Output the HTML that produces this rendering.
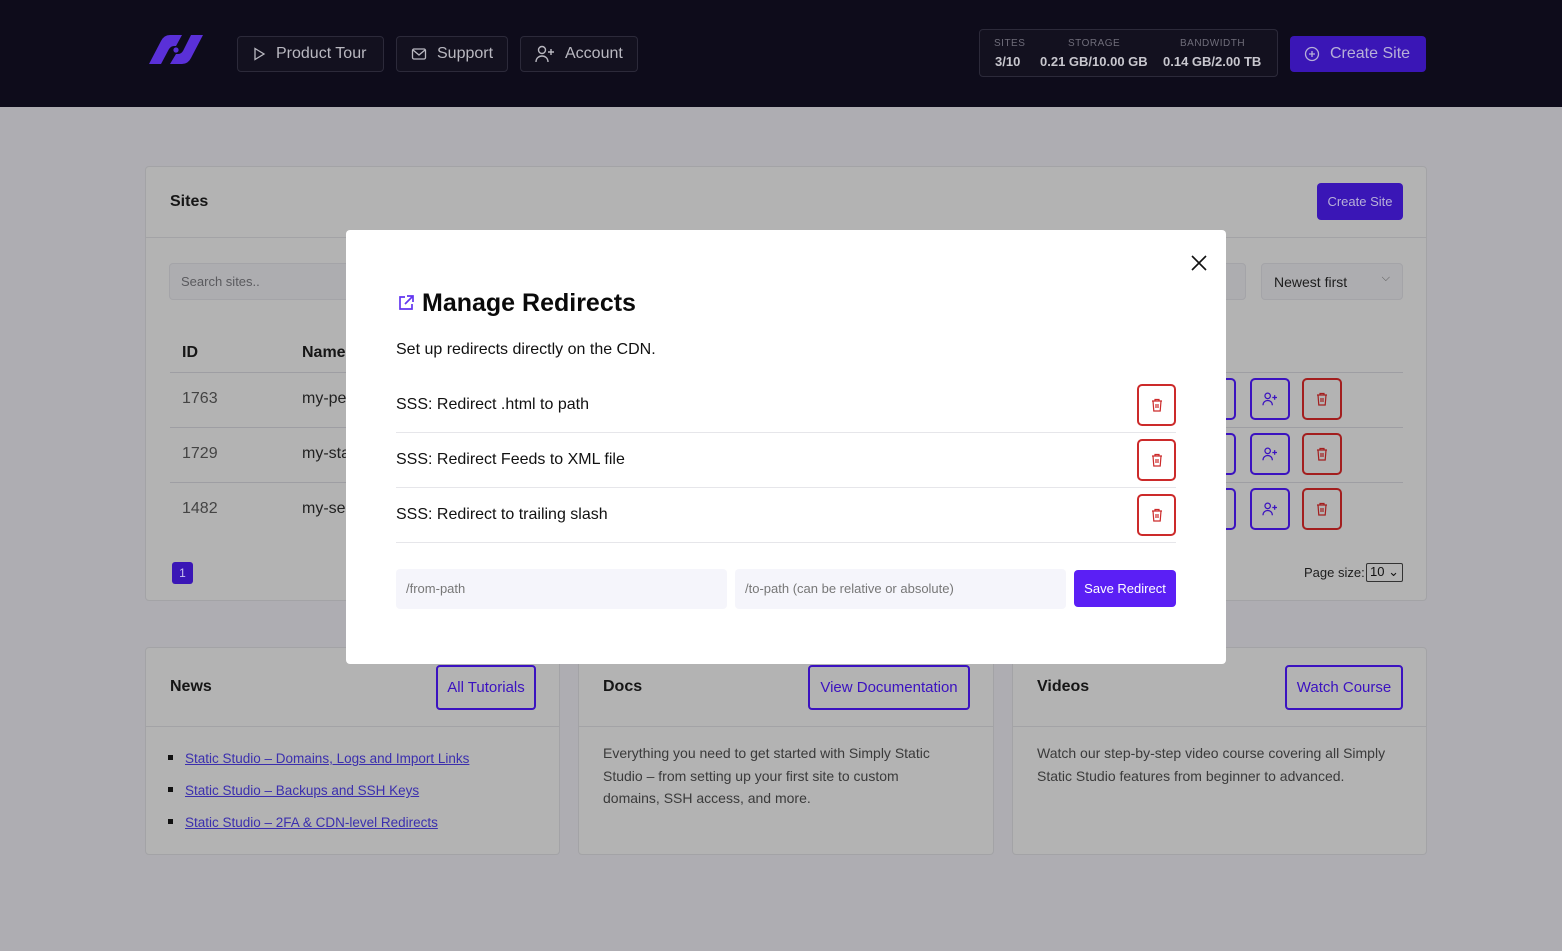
<!DOCTYPE html>
<html><head><meta charset="utf-8"><style>
*{box-sizing:border-box;margin:0;padding:0}
body{width:1562px;height:951px;position:relative;overflow:hidden;background:#aeadb2;font-family:"Liberation Sans",sans-serif;color:#111}
.a{position:absolute}
.hdr{left:0;top:0;width:1562px;height:107px;background:#0e0c1b}
.nb{position:absolute;top:36px;height:36px;border:1px solid #2c2a3a;border-radius:4px;background:#13111f;color:#b9b8c0;font-size:16px;display:flex;align-items:center;padding-left:14px;gap:10px}
.card{position:absolute;background:#b3b3b3;border:1px solid #a3a3a6;border-radius:4px}
.ib{position:absolute;width:40px;height:42px;border:2px solid #3b12c0;border-radius:5px;display:flex;align-items:center;justify-content:center}
.ib.r{border-color:#a31e1e}
.lnk{color:#3b2fae;text-decoration:underline;font-size:13.5px}
.modal{left:346px;top:230px;width:880px;height:434px;background:#fff;border-radius:4px}
.row{position:absolute;left:50px;width:780px;height:55px;border-bottom:1px solid #e6e6ea;display:flex;align-items:center;font-size:16px;color:#111}
.del{position:absolute;right:0;top:-3px;width:39px;height:42px;border:2px solid #cc2a2a;border-radius:5px;display:flex;align-items:center;justify-content:center}
</style></head><body>
<div class="a hdr">
 <svg class="a" style="left:148px;top:35px" width="56" height="30" viewBox="0 0 56 30"><path d="M1 29L13 29L21 14Q23 11 26 11L28 11L34 0L22 0Q16 0 13 6Z" fill="#5a30d8"/><path d="M55 0L43 0L35 16Q33 19 30 19L28 19L22 29L34 29Q40 29 43 23Z" fill="#5a30d8"/><circle cx="28" cy="15" r="2.6" fill="#5a30d8"/></svg>
 <div class="nb" style="left:237px;width:147px"><svg width="14" height="14" viewBox="0 0 14 14"><path d="M3 1.5l9 5.5-9 5.5z" fill="none" stroke="#b9b8c0" stroke-width="1.3"/></svg>Product Tour</div>
 <div class="nb" style="left:396px;width:112px"><svg width="16" height="14" viewBox="0 0 16 14"><rect x="1.5" y="2" width="13" height="10" rx="1.5" fill="none" stroke="#b9b8c0" stroke-width="1.3"/><path d="M2 3l6 5 6-5" fill="none" stroke="#b9b8c0" stroke-width="1.3"/></svg>Support</div>
 <div class="nb" style="left:520px;width:118px"><svg width="20" height="18" viewBox="0 0 20 18"><circle cx="7" cy="5" r="3.5" fill="none" stroke="#b9b8c0" stroke-width="1.4"/><path d="M1 17c0-4 3-6 6-6s6 2 6 6M16 4v6M13 7h6" fill="none" stroke="#b9b8c0" stroke-width="1.4"/></svg>Account</div>
 <div class="a" style="left:979px;top:29px;width:299px;height:48px;border:1px solid #2c2a3a;border-radius:4px;background:#13111f"></div>
 <div class="a" style="left:994px;top:38px;font-size:10px;color:#6f6d7a;letter-spacing:.5px">SITES</div>
 <div class="a" style="left:995px;top:54px;font-size:13px;color:#c8c7ce;font-weight:bold">3/10</div>
 <div class="a" style="left:1068px;top:38px;font-size:10px;color:#6f6d7a;letter-spacing:.5px">STORAGE</div>
 <div class="a" style="left:1040px;top:54px;font-size:13px;color:#c8c7ce;font-weight:bold">0.21 GB/10.00 GB</div>
 <div class="a" style="left:1180px;top:38px;font-size:10px;color:#6f6d7a;letter-spacing:.5px">BANDWIDTH</div>
 <div class="a" style="left:1163px;top:54px;font-size:13px;color:#c8c7ce;font-weight:bold">0.14 GB/2.00 TB</div>
 <div class="a" style="left:1290px;top:36px;width:136px;height:36px;background:#3a16b6;border-radius:4px;color:#b7b0d8;font-size:16px;display:flex;align-items:center;padding-left:14px;gap:10px"><svg width="16" height="16" viewBox="0 0 16 16"><circle cx="8" cy="8" r="6.5" fill="none" stroke="#b7b0d8" stroke-width="1.3"/><path d="M8 5v6M5 8h6" stroke="#b7b0d8" stroke-width="1.3"/></svg>Create Site</div>
</div>

<div class="card" style="left:145px;top:166px;width:1282px;height:435px">
 <div class="a" style="left:0;top:70px;width:1280px;height:1px;background:#a3a3a6"></div>
 <div class="a" style="left:24px;top:26px;font-size:16px;font-weight:bold;color:#161616">Sites</div>
 <div class="a" style="left:1171px;top:16px;width:86px;height:37px;background:#3a16b6;border-radius:4px;color:#b7b0d8;font-size:13px;display:flex;align-items:center;justify-content:center">Create Site</div>
 <div class="a" style="left:23px;top:96px;width:200px;height:37px;background:#adadb0;border:1px solid #a4a4a8;border-radius:4px;font-size:13px;color:#5a5a5e;padding:10px 11px">Search sites..</div>
 <div class="a" style="left:1050px;top:96px;width:50px;height:37px;background:#adadb0;border:1px solid #a4a4a8;border-radius:4px"></div>
 <div class="a" style="left:1115px;top:96px;width:142px;height:37px;background:#adadb0;border:1px solid #a4a4a8;border-radius:4px;font-size:14px;color:#1d1d1d;padding:10px 12px">Newest first<span style="position:absolute;right:12px;top:8px;font-size:11px;color:#555">⌵</span></div>
 <div class="a" style="left:36px;top:177px;font-size:16px;font-weight:bold;color:#161616">ID</div>
 <div class="a" style="left:156px;top:177px;font-size:16px;font-weight:bold;color:#161616">Name</div>
 <div class="a" style="left:24px;top:205px;width:1233px;height:1px;background:#9e9ea3"></div>
 <div class="a" style="left:24px;top:260px;width:1233px;height:1px;background:#9e9ea3"></div>
 <div class="a" style="left:24px;top:315px;width:1233px;height:1px;background:#9e9ea3"></div>
 <div class="a" style="left:36px;top:223px;font-size:16px;color:#444">1763</div><div class="a" style="left:156px;top:223px;font-size:16px;color:#222">my-pe</div>
 <div class="a" style="left:36px;top:278px;font-size:16px;color:#444">1729</div><div class="a" style="left:156px;top:278px;font-size:16px;color:#222">my-sta</div>
 <div class="a" style="left:36px;top:333px;font-size:16px;color:#444">1482</div><div class="a" style="left:156px;top:333px;font-size:16px;color:#222">my-se</div>
 <div class="a" style="left:26px;top:395px;width:21px;height:22px;background:#3a16b6;border-radius:3px;color:#c9c2ee;font-size:12px;display:flex;align-items:center;justify-content:center">1</div>
 <div class="a" style="left:1158px;top:398px;font-size:13px;color:#1d1d1d">Page size:</div>
 <div class="a" style="left:1220px;top:396px;width:37px;height:19px;border:1px solid #333;border-radius:2px;font-size:13px;padding-left:3px;color:#111">10 ⌄</div>
</div>
<div class="ib" style="left:1196px;top:378px"></div><div class="ib" style="left:1250px;top:378px"><svg width="16" height="14" viewBox="0 0 20 18"><circle cx="7" cy="5" r="3.5" fill="none" stroke="#3b12c0" stroke-width="1.6"/><path d="M1 17c0-4 3-6 6-6s6 2 6 6M16 4v6M13 7h6" fill="none" stroke="#3b12c0" stroke-width="1.6"/></svg></div><div class="ib r" style="left:1302px;top:378px"><svg width="12" height="14" viewBox="0 0 12 14"><path d="M1 3h10M4 3V1.5h4V3M2 3l.8 10h6.4L10 3M5 6v4M7 6v4" fill="none" stroke="#a31e1e" stroke-width="1.2"/></svg></div>
<div class="ib" style="left:1196px;top:433px"></div><div class="ib" style="left:1250px;top:433px"><svg width="16" height="14" viewBox="0 0 20 18"><circle cx="7" cy="5" r="3.5" fill="none" stroke="#3b12c0" stroke-width="1.6"/><path d="M1 17c0-4 3-6 6-6s6 2 6 6M16 4v6M13 7h6" fill="none" stroke="#3b12c0" stroke-width="1.6"/></svg></div><div class="ib r" style="left:1302px;top:433px"><svg width="12" height="14" viewBox="0 0 12 14"><path d="M1 3h10M4 3V1.5h4V3M2 3l.8 10h6.4L10 3M5 6v4M7 6v4" fill="none" stroke="#a31e1e" stroke-width="1.2"/></svg></div>
<div class="ib" style="left:1196px;top:488px"></div><div class="ib" style="left:1250px;top:488px"><svg width="16" height="14" viewBox="0 0 20 18"><circle cx="7" cy="5" r="3.5" fill="none" stroke="#3b12c0" stroke-width="1.6"/><path d="M1 17c0-4 3-6 6-6s6 2 6 6M16 4v6M13 7h6" fill="none" stroke="#3b12c0" stroke-width="1.6"/></svg></div><div class="ib r" style="left:1302px;top:488px"><svg width="12" height="14" viewBox="0 0 12 14"><path d="M1 3h10M4 3V1.5h4V3M2 3l.8 10h6.4L10 3M5 6v4M7 6v4" fill="none" stroke="#a31e1e" stroke-width="1.2"/></svg></div>

<div class="card" style="left:145px;top:647px;width:415px;height:208px">
 <div class="a" style="left:0;top:78px;width:413px;height:1px;background:#a3a3a6"></div>
 <div class="a" style="left:24px;top:30px;font-size:16px;font-weight:bold;color:#161616">News</div>
 <div class="a" style="left:290px;top:17px;width:100px;height:45px;border:2px solid #3b12c0;border-radius:4px;color:#3b12c0;font-size:15px;display:flex;align-items:center;justify-content:center">All Tutorials</div>
 <div class="a" style="left:22px;top:107px;width:5px;height:5px;background:#111"></div><a class="a lnk" style="left:39px;top:103px">Static Studio – Domains, Logs and Import Links</a>
 <div class="a" style="left:22px;top:139px;width:5px;height:5px;background:#111"></div><a class="a lnk" style="left:39px;top:135px">Static Studio – Backups and SSH Keys</a>
 <div class="a" style="left:22px;top:171px;width:5px;height:5px;background:#111"></div><a class="a lnk" style="left:39px;top:167px">Static Studio – 2FA &amp; CDN-level Redirects</a>
</div>
<div class="card" style="left:578px;top:647px;width:416px;height:208px">
 <div class="a" style="left:0;top:78px;width:414px;height:1px;background:#a3a3a6"></div>
 <div class="a" style="left:24px;top:30px;font-size:16px;font-weight:bold;color:#161616">Docs</div>
 <div class="a" style="left:229px;top:17px;width:162px;height:45px;border:2px solid #3b12c0;border-radius:4px;color:#3b12c0;font-size:15px;display:flex;align-items:center;justify-content:center">View Documentation</div>
 <div class="a" style="left:24px;top:94px;width:345px;font-size:14px;line-height:22.5px;color:#3a3a3a">Everything you need to get started with Simply Static Studio – from setting up your first site to custom domains, SSH access, and more.</div>
</div>
<div class="card" style="left:1012px;top:647px;width:415px;height:208px">
 <div class="a" style="left:0;top:78px;width:413px;height:1px;background:#a3a3a6"></div>
 <div class="a" style="left:24px;top:30px;font-size:16px;font-weight:bold;color:#161616">Videos</div>
 <div class="a" style="left:272px;top:17px;width:118px;height:45px;border:2px solid #3b12c0;border-radius:4px;color:#3b12c0;font-size:15px;display:flex;align-items:center;justify-content:center">Watch Course</div>
 <div class="a" style="left:24px;top:94px;width:370px;font-size:14px;line-height:22.5px;color:#3a3a3a">Watch our step-by-step video course covering all Simply Static Studio features from beginner to advanced.</div>
</div>

<div class="a modal">
 <svg class="a" style="left:844px;top:24px" width="18" height="18" viewBox="0 0 18 18"><path d="M2 2l14 14M16 2L2 16" stroke="#111" stroke-width="1.6"/></svg>
 <svg class="a" style="left:51px;top:64px" width="18" height="18" viewBox="0 0 18 18"><path d="M8 3H3v12h12v-5M10 2h6v6M16 2L8 10" fill="none" stroke="#6236f0" stroke-width="1.7"/></svg>
 <div class="a" style="left:76px;top:59px;font-size:25px;font-weight:bold;color:#0a0a0a">Manage Redirects</div>
 <div class="a" style="left:50px;top:111px;font-size:16px;color:#111">Set up redirects directly on the CDN.</div>
 <div class="row" style="top:148px">SSS: Redirect .html to path<div class="del" style="top:6px"><svg width="12" height="14" viewBox="0 0 12 14"><path d="M1 3h10M4 3V1.5h4V3M2 3l.8 10h6.4L10 3M5 6v4M7 6v4" fill="none" stroke="#cc2a2a" stroke-width="1.2"/></svg></div></div>
 <div class="row" style="top:203px">SSS: Redirect Feeds to XML file<div class="del" style="top:6px"><svg width="12" height="14" viewBox="0 0 12 14"><path d="M1 3h10M4 3V1.5h4V3M2 3l.8 10h6.4L10 3M5 6v4M7 6v4" fill="none" stroke="#cc2a2a" stroke-width="1.2"/></svg></div></div>
 <div class="row" style="top:258px">SSS: Redirect to trailing slash<div class="del" style="top:6px"><svg width="12" height="14" viewBox="0 0 12 14"><path d="M1 3h10M4 3V1.5h4V3M2 3l.8 10h6.4L10 3M5 6v4M7 6v4" fill="none" stroke="#cc2a2a" stroke-width="1.2"/></svg></div></div>
 <div class="a" style="left:50px;top:339px;width:331px;height:40px;background:#f5f5fb;border-radius:4px;font-size:13px;color:#777;padding:12px 10px">/from-path</div>
 <div class="a" style="left:389px;top:339px;width:331px;height:40px;background:#f5f5fb;border-radius:4px;font-size:13px;color:#777;padding:12px 10px">/to-path (can be relative or absolute)</div>
 <div class="a" style="left:728px;top:340px;width:102px;height:37px;background:#5b1ff5;border-radius:4px;font-size:13px;color:#fff;display:flex;align-items:center;justify-content:center">Save Redirect</div>
</div>
</body></html>
